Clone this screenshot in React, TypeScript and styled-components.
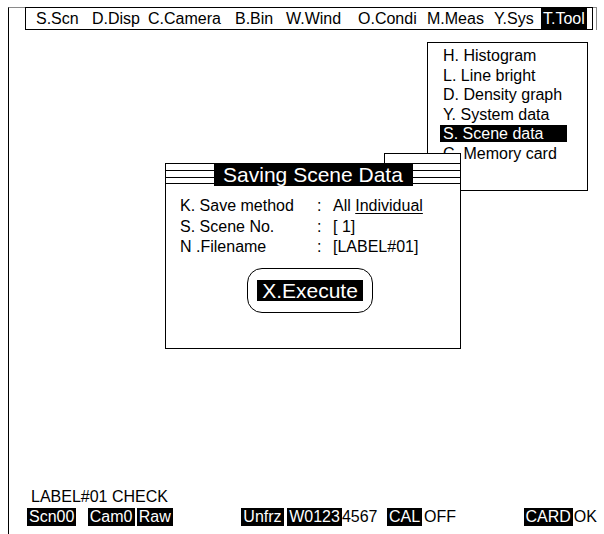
import React from "react";
import styled, { createGlobalStyle } from "styled-components";

const GlobalStyle = createGlobalStyle`
  html, body {
    margin: 0;
    padding: 0;
    background: #fff;
  }
  body {
    font-family: "Liberation Sans", Arial, sans-serif;
    color: #000;
  }
`;

const Screen = styled.div`
  position: relative;
  width: 604px;
  height: 534px;
  box-sizing: border-box;
  padding: 7px 0 0 8px;
  overflow: hidden;
  background: #fff;
`;

const Frame = styled.div`
  position: relative;
  width: 589px;
  height: 527px;
  box-sizing: border-box;
  border-left: 1px solid #000;
  border-top: 1px solid #8a8a8a;
  display: flex;
  flex-direction: column;
  &::after {
    content: "";
    position: absolute;
    top: 0;
    right: 0;
    width: 1px;
    height: 22px;
    background: #8a8a8a;
  }
`;

const MenuBar = styled.div`
  display: flex;
  align-items: stretch;
  width: 568px;
  height: 23px;
  margin: -1px 0 0 16px;
  padding-left: 10px;
  box-sizing: border-box;
  border: 1px solid #000;
  font-size: 16px;
`;

const MenuItem = styled.div<{ $w?: number; $active?: boolean }>`
  display: flex;
  align-items: center;
  width: ${(p) => (p.$w ? `${p.$w}px` : "auto")};
  padding: ${(p) => (p.$active ? "0 2px" : "0")};
  white-space: nowrap;
  background: ${(p) => (p.$active ? "#000" : "transparent")};
  color: ${(p) => (p.$active ? "#fff" : "#000")};
`;

const StatusArea = styled.div`
  margin-top: auto;
  padding: 0 0 8px 18px;
  font-size: 16px;
`;

const StatusLabel = styled.div`
  padding-left: 4px;
  line-height: 20px;
`;

const StatusRow = styled.div`
  display: flex;
  align-items: center;
  height: 19px;
`;

const StatusCell = styled.div<{ $w?: number }>`
  display: flex;
  align-items: center;
  width: ${(p) => (p.$w ? `${p.$w}px` : "auto")};
  white-space: nowrap;
`;

const Tag = styled.span`
  background: #000;
  color: #fff;
  padding: 0 2px;
  line-height: 18px;
`;

const Plain = styled.span<{ $gap?: number }>`
  margin-left: ${(p) => p.$gap ?? 0}px;
  line-height: 18px;
`;

const Dropdown = styled.div`
  position: absolute;
  left: 427px;
  top: 42px;
  width: 161px;
  height: 149px;
  box-sizing: border-box;
  border: 1px solid #000;
  background: #fff;
  padding: 3px 0 0 12px;
  font-size: 16px;
`;

const DropRow = styled.div`
  display: flex;
  align-items: center;
  height: 19.5px;
`;

const DropLabel = styled.span<{ $active?: boolean }>`
  display: inline-block;
  width: 127px;
  box-sizing: border-box;
  padding: 0 3px;
  line-height: 17px;
  white-space: nowrap;
  background: ${(p) => (p.$active ? "#000" : "transparent")};
  color: ${(p) => (p.$active ? "#fff" : "#000")};
`;

const BackWindow = styled.div`
  position: absolute;
  left: 384px;
  top: 153px;
  width: 77px;
  height: 20px;
  box-sizing: border-box;
  border: 1px solid #000;
  background: #fff;
`;

const Dialog = styled.div`
  position: absolute;
  left: 165px;
  top: 163px;
  width: 296px;
  height: 186px;
  box-sizing: border-box;
  border: 1px solid #000;
  background: #fff;
  font-size: 16px;
`;

const TitleBar = styled.div`
  display: flex;
  justify-content: center;
  height: 22px;
  background:
    linear-gradient(#000, #000) 0 6px / 100% 1px no-repeat,
    linear-gradient(#000, #000) 0 13px / 100% 1px no-repeat,
    linear-gradient(#000, #000) 0 19px / 100% 1px no-repeat;
`;

const Title = styled.div`
  width: 199px;
  height: 23px;
  margin-top: -1px;
  background: #000;
  color: #fff;
  font-size: 21px;
  line-height: 23px;
  text-align: center;
`;

const Fields = styled.div`
  display: grid;
  grid-template-columns: 137px 16px auto;
  grid-auto-rows: 20.5px;
  align-items: center;
  padding: 10px 0 0 14px;
  white-space: nowrap;
`;

const Underline = styled.span`
  text-decoration: underline;
  text-underline-offset: 2px;
`;

const ButtonWrap = styled.div`
  padding: 10px 0 0 81px;
`;

const ExecButton = styled.div`
  display: flex;
  align-items: center;
  justify-content: center;
  width: 126px;
  height: 45px;
  box-sizing: border-box;
  border: 1px solid #000;
  border-radius: 15px;
`;

const ExecLabel = styled.span`
  background: #000;
  color: #fff;
  font-size: 21px;
  line-height: 21px;
  padding: 0 5px;
`;

const menu = [
  { t: "S.Scn", w: 56 },
  { t: "D.Disp", w: 56 },
  { t: "C.Camera", w: 87 },
  { t: "B.Bin", w: 51 },
  { t: "W.Wind", w: 72 },
  { t: "O.Condi", w: 69 },
  { t: "M.Meas", w: 67 },
  { t: "Y.Sys", w: 47 },
];

const tools = [
  "H. Histogram",
  "L. Line bright",
  "D. Density graph",
  "Y. System data",
  "S. Scene data",
  "C. Memory card",
];

export default function App() {
  return (
    <>
      <GlobalStyle />
      <Screen>
        <Frame>
          <MenuBar>
            {menu.map((m) => (
              <MenuItem key={m.t} $w={m.w}>
                {m.t}
              </MenuItem>
            ))}
            <MenuItem $active>T.Tool</MenuItem>
          </MenuBar>

          <StatusArea>
            <StatusLabel>LABEL#01 CHECK</StatusLabel>
            <StatusRow>
              <StatusCell $w={61}>
                <Tag>Scn00</Tag>
              </StatusCell>
              <StatusCell $w={49}>
                <Tag>Cam0</Tag>
              </StatusCell>
              <StatusCell $w={105}>
                <Tag>Raw</Tag>
              </StatusCell>
              <StatusCell $w={46}>
                <Tag>Unfrz</Tag>
              </StatusCell>
              <StatusCell $w={100}>
                <Tag>W0123</Tag>
                <Plain>4567</Plain>
              </StatusCell>
              <StatusCell $w={137}>
                <Tag>CAL</Tag>
                <Plain $gap={2}>OFF</Plain>
              </StatusCell>
              <StatusCell>
                <Tag>CARD</Tag>
                <Plain $gap={1}>OK</Plain>
              </StatusCell>
            </StatusRow>
          </StatusArea>
        </Frame>

        <Dropdown>
          {tools.map((t) => (
            <DropRow key={t}>
              <DropLabel $active={t === "S. Scene data"}>{t}</DropLabel>
            </DropRow>
          ))}
        </Dropdown>

        <BackWindow />

        <Dialog>
          <TitleBar>
            <Title>Saving Scene Data</Title>
          </TitleBar>
          <Fields>
            <span>K. Save method</span>
            <span>:</span>
            <span>
              All <Underline>Individual</Underline>
            </span>
            <span>S. Scene No.</span>
            <span>:</span>
            <span>[ 1]</span>
            <span>N .Filename</span>
            <span>:</span>
            <span>[LABEL#01]</span>
          </Fields>
          <ButtonWrap>
            <ExecButton>
              <ExecLabel>X.Execute</ExecLabel>
            </ExecButton>
          </ButtonWrap>
        </Dialog>
      </Screen>
    </>
  );
}
